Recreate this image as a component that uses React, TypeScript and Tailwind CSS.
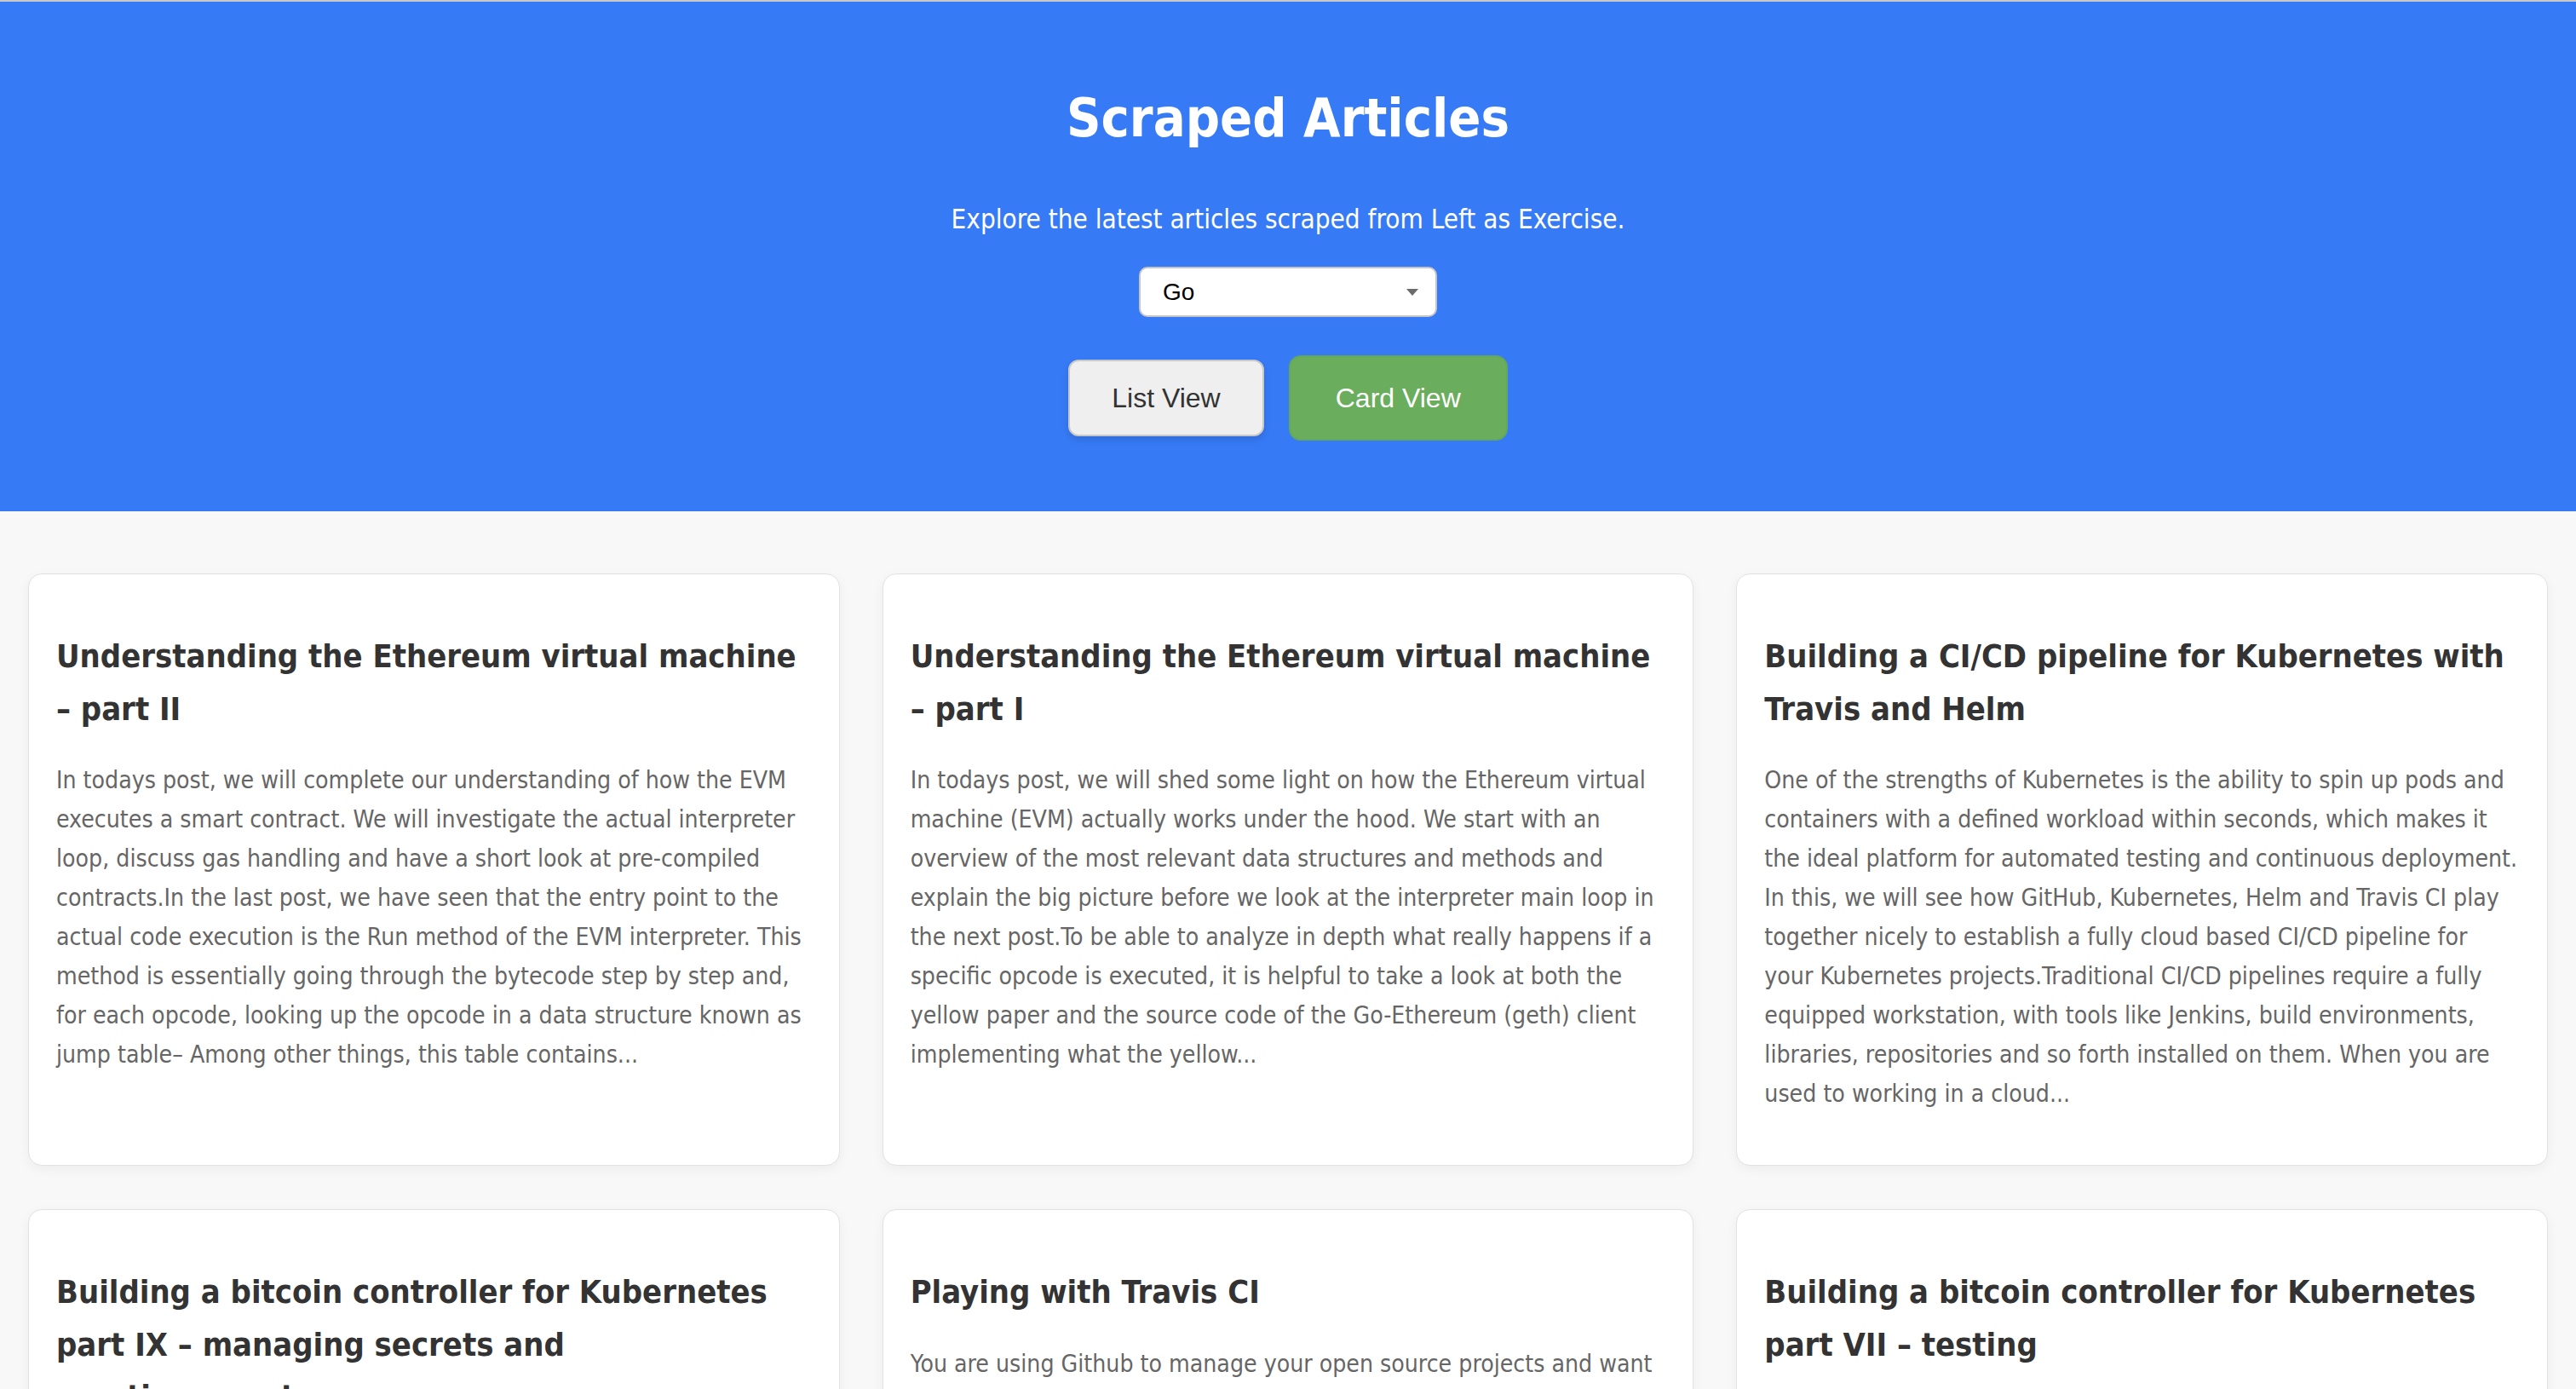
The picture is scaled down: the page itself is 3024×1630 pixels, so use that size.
import { useState } from "react";

interface IArticle {
  title: string;
  summary: string;
}

const articles: IArticle[] = [
  {
    title: "Understanding the Ethereum virtual machine – part II",
    summary:
      "In todays post, we will complete our understanding of how the EVM executes a smart contract. We will investigate the actual interpreter loop, discuss gas handling and have a short look at pre-compiled contracts.In the last post, we have seen that the entry point to the actual code execution is the Run method of the EVM interpreter. This method is essentially going through the bytecode step by step and, for each opcode, looking up the opcode in a data structure known as jump table– Among other things, this table contains...",
  },
  {
    title: "Understanding the Ethereum virtual machine – part I",
    summary:
      "In todays post, we will shed some light on how the Ethereum virtual machine (EVM) actually works under the hood. We start with an overview of the most relevant data structures and methods and explain the big picture before we look at the interpreter main loop in the next post.To be able to analyze in depth what really happens if a specific opcode is executed, it is helpful to take a look at both the yellow paper and the source code of the Go-Ethereum (geth) client implementing what the yellow...",
  },
  {
    title: "Building a CI/CD pipeline for Kubernetes with Travis and Helm",
    summary:
      "One of the strengths of Kubernetes is the ability to spin up pods and containers with a defined workload within seconds, which makes it the ideal platform for automated testing and continuous deployment. In this, we will see how GitHub, Kubernetes, Helm and Travis CI play together nicely to establish a fully cloud based CI/CD pipeline for your\u00A0Kubernetes projects.Traditional CI/CD pipelines require a fully equipped workstation, with tools like Jenkins, build environments, libraries, repositories and so forth installed on them. When you are used to working in a cloud...",
  },
  {
    title: "Building a bitcoin controller for Kubernetes part IX – managing secrets and creating\u00A0events",
    summary:
      "In the last post, we have added a service to our controller which exposes the RPC port of the bitcoin daemon. In this post, we will learn how to store the credentials in a secret and how our controller can create events to inform the user about what is going on...",
  },
  {
    title: "Playing with Travis CI",
    summary:
      "You are using Github to manage your open source projects and want a CI/CD pipeline that builds and tests your code automatically whenever you push a change? In this post, we will take a first look at Travis CI and see how easy it is to get started...",
  },
  {
    title: "Building a bitcoin controller for Kubernetes part VII – testing",
    summary:
      "Today, we will look at how our controller can be tested. Unit tests are a good start, but for a controller that talks to the Kubernetes API we also need tests against a real cluster...",
  },
];

function ArticleCard({ title, summary }: IArticle) {
  return (
    <div className="bg-white border border-[#e2e2e2] rounded-[16px] px-[32px] pt-[33px] pb-[32px] shadow-[0_4px_14px_rgba(0,0,0,0.05)]">
      <h3 className="mt-[33px] text-[37.8px] leading-[61.5px] font-bold text-[#333333]">{title}</h3>
      <p className="mt-[30px] mb-[28px] text-[28.2px] leading-[46px] text-[#666666]">{summary}</p>
    </div>
  );
}

export default function App() {
  const [view, setView] = useState<"list" | "card">("card");

  return (
    <div
      className="min-h-screen bg-[#f8f8f8]"
      style={{ fontFamily: '"DejaVu Sans Condensed", "DejaVu Sans", sans-serif', fontStretch: "condensed" }}
    >
      <header className="bg-[#377af5] border-t-2 border-[#c9c9c9] flex flex-col items-center pt-[105px] pb-[83px] text-white">
        <h1 className="text-[62.6px] leading-[64px] font-bold">Scraped Articles</h1>
        <p className="mt-[70px] text-[31.2px] leading-[32px]">
          Explore the latest articles scraped from Left as Exercise.
        </p>
        <div className="relative mt-[40px] w-[350px] h-[59px]">
          <select
            className="appearance-none w-full h-full bg-white text-black border-2 border-[#c6c6c6] rounded-[10px] pl-[26px] text-[28px] outline-none"
            style={{ fontFamily: '"Liberation Sans", Arial, sans-serif' }}
            defaultValue="Go"
          >
            <option>Go</option>
            <option>Kubernetes</option>
            <option>Ethereum</option>
          </select>
          <svg
            className="absolute right-[22px] top-[26px] pointer-events-none"
            width="14"
            height="8"
            viewBox="0 0 14 8"
          >
            <path d="M0 0 L14 0 L7 8 Z" fill="#6b6b6b" />
          </svg>
        </div>
        <div
          className="mt-[45px] flex items-center gap-[29px] h-[100px]"
          style={{ fontFamily: '"Liberation Sans", Arial, sans-serif' }}
        >
          <button
            onClick={() => setView("list")}
            className={
              view === "list"
                ? "bg-[#69ad5d] text-white border-2 border-[#65a85a] rounded-[14px] px-[53px] py-[29px] text-[32px] leading-[38px]"
                : "bg-[#efefef] text-[#333333] border-2 border-[#c8c8c8] rounded-[12px] px-[49px] py-[24px] text-[32px] leading-[38px] shadow-[0_4px_8px_rgba(0,0,0,0.12)]"
            }
          >
            List View
          </button>
          <button
            onClick={() => setView("card")}
            className={
              view === "card"
                ? "bg-[#69ad5d] text-white border-2 border-[#65a85a] rounded-[14px] px-[53px] py-[29px] text-[32px] leading-[38px]"
                : "bg-[#efefef] text-[#333333] border-2 border-[#c8c8c8] rounded-[12px] px-[49px] py-[24px] text-[32px] leading-[38px] shadow-[0_4px_8px_rgba(0,0,0,0.12)]"
            }
          >
            Card View
          </button>
        </div>
      </header>

      <main className="px-[33px] pt-[73px] pb-[60px] grid grid-cols-3 gap-x-[50px] gap-y-[51px]">
        {articles.map((a) => (
          <ArticleCard key={a.title} title={a.title} summary={a.summary} />
        ))}
      </main>
    </div>
  );
}
